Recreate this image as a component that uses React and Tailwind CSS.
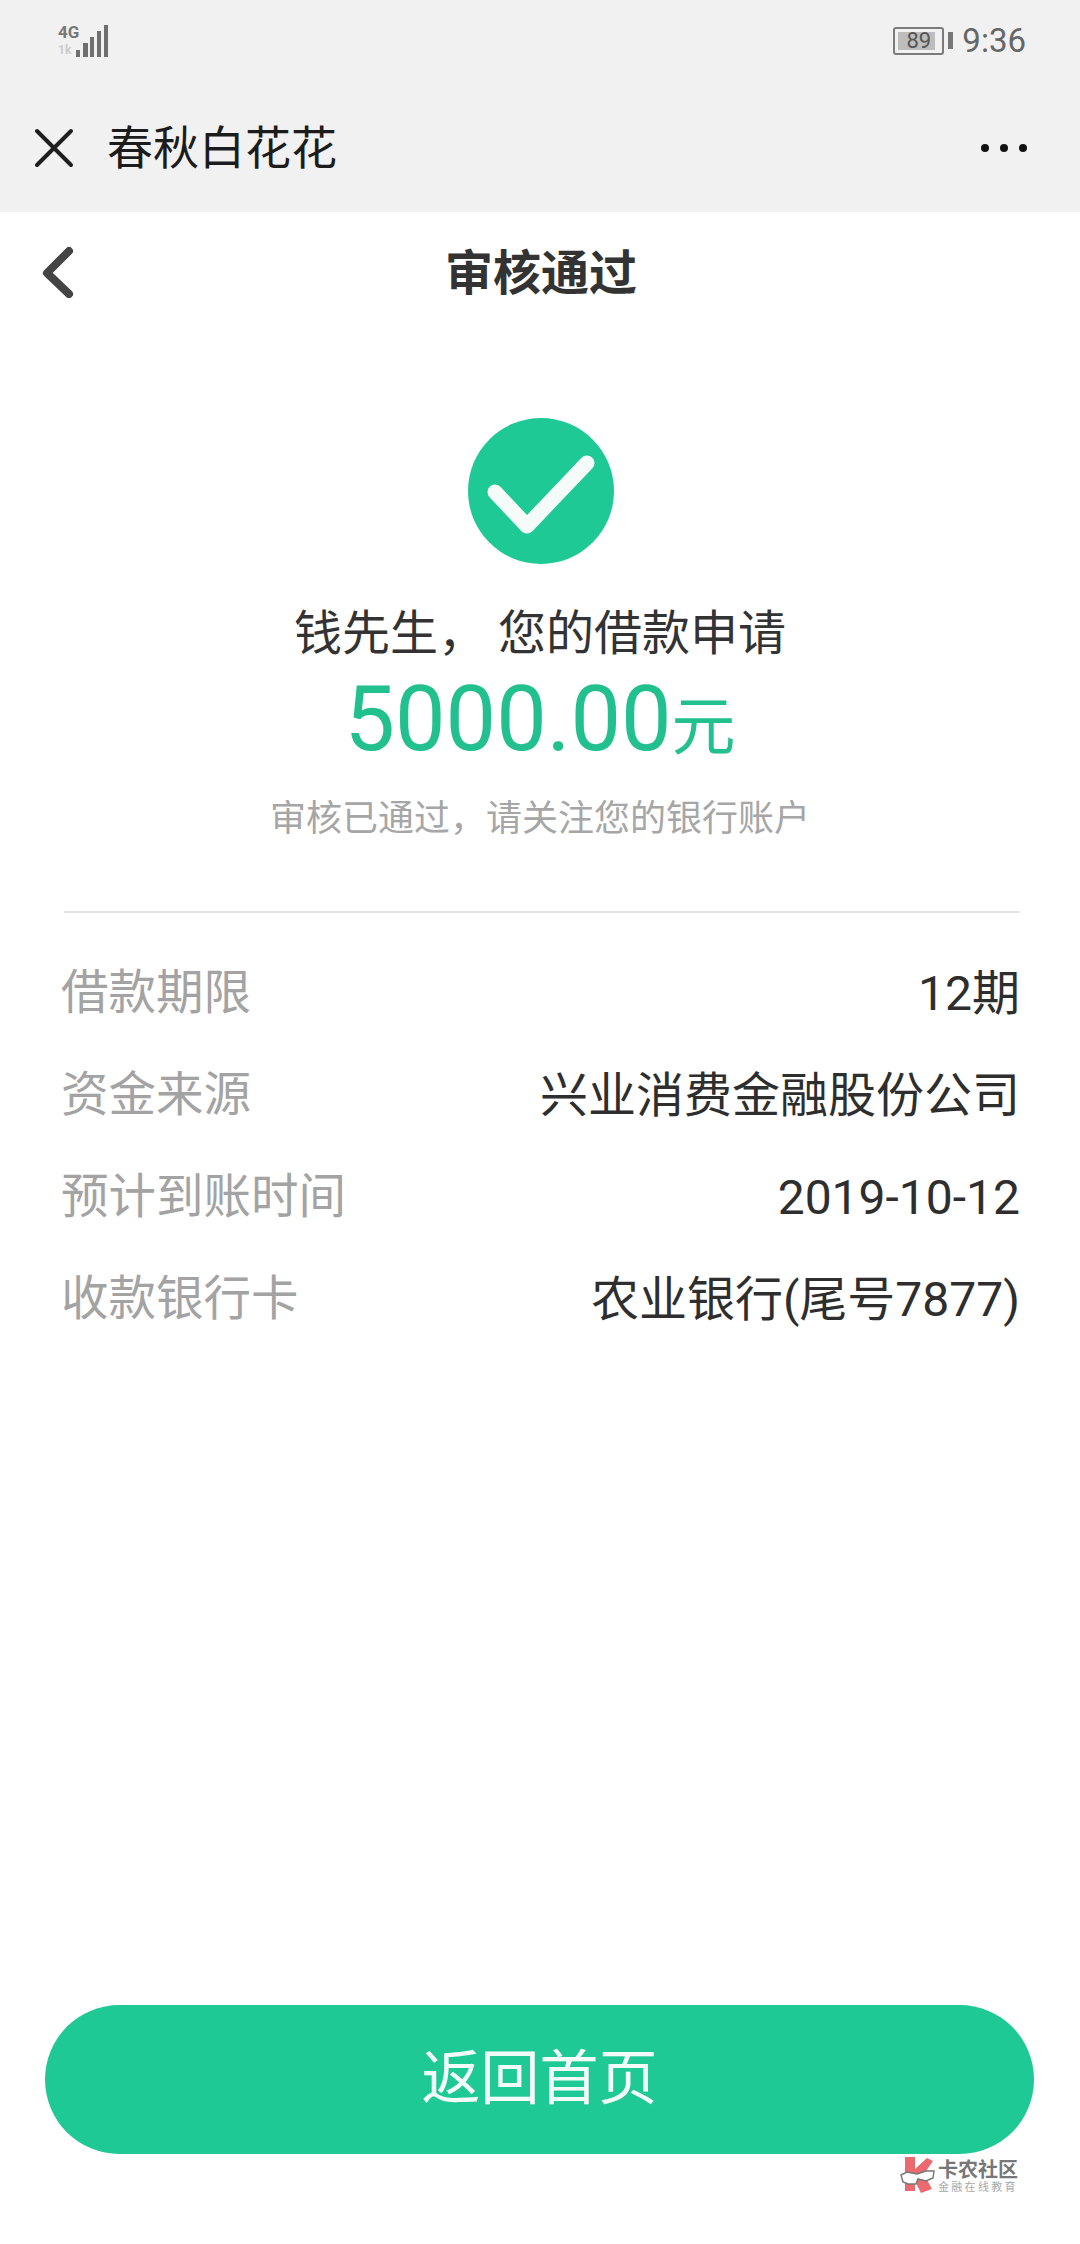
const cjk = { fontFamily: '"Roboto","Noto Sans CJK SC",sans-serif' };

function Row({ label, value }) {
  return (
    <div className="flex h-[102px] items-center justify-between">
      <span className="text-[47.5px] leading-none text-[#a3a3a3]">{label}</span>
      <span className="text-[48px] leading-none text-[#2e2e2e]">{value}</span>
    </div>
  );
}

export default function App() {
  return (
    <div className="relative h-[2244px] w-[1080px] overflow-hidden bg-white" style={cjk}>
      <div className="h-[212px] bg-[#f1f1f1]">
        <div className="flex h-[116px] items-start justify-between pl-[58px] pr-[54px] pt-[24px]">
          <div className="relative h-[34px] w-[52px]">
            <span className="absolute left-0 top-[-1px] text-[17px] font-bold leading-[18px] text-[#777]">4G</span>
            <span className="absolute left-0 top-[20px] text-[12px] font-bold leading-[13px] text-[#ccc]">1k</span>
            <svg className="absolute left-0 top-0" width="52" height="34" viewBox="0 0 52 34">
              <g fill="#6f6f6f">
                <rect x="18" y="26" width="4" height="7" />
                <rect x="25" y="19" width="5" height="14" />
                <rect x="32" y="13" width="4" height="20" />
                <rect x="39" y="7" width="4" height="26" />
                <rect x="46" y="1" width="4" height="32" />
              </g>
            </svg>
          </div>
          <div className="flex items-center">
            <div className="relative mr-[2px] flex h-[28px] w-[51px] items-center justify-center rounded-[3px] border-2 border-[#7b7b7b]">
              <div className="absolute inset-y-[3px] left-[3px] right-[7px] bg-[#bdbdbd]" />
              <span className="relative text-[22px] leading-none text-[#555]">89</span>
            </div>
            <div className="ml-[2px] h-[17px] w-[5px] bg-[#777]" />
            <span className="ml-[9px] text-[33px] leading-none text-[#666]">9:36</span>
          </div>
        </div>
        <div className="flex h-[64px] items-center justify-between pl-[33px] pr-[53px]">
          <div className="flex items-center">
            <svg width="42" height="42" viewBox="0 0 42 42" fill="none" stroke="#1f1f1f" strokeWidth="4" strokeLinecap="round">
              <path d="M4 4 38 38M38 4 4 38" />
            </svg>
            <span className="ml-[32px] text-[46px] leading-none text-[#1c1c1c]">春秋白花花</span>
          </div>
          <div className="flex gap-[11px]">
            <div className="size-[8px] rounded-full bg-[#111]" />
            <div className="size-[8px] rounded-full bg-[#111]" />
            <div className="size-[8px] rounded-full bg-[#111]" />
          </div>
        </div>
      </div>

      <div className="relative flex h-[120px] items-center justify-center pl-[2px] pt-[3px]">
        <svg className="absolute left-[40px] top-[34px]" width="36" height="52" viewBox="0 0 36 52" fill="none" stroke="#444" strokeWidth="8" strokeLinecap="round" strokeLinejoin="round">
          <path d="M29 5 7 27 29 48" />
        </svg>
        <span className="text-[48px] font-bold leading-none text-[#333]">审核通过</span>
      </div>

      <div className="flex flex-col items-center pt-[86px]">
        <svg className="ml-[1px]" width="146" height="146" viewBox="0 0 146 146">
          <circle cx="73" cy="73" r="73" fill="#1fc995" />
          <path d="M27 74 59 108 119 45" fill="none" stroke="#f4fbf8" strokeWidth="15" strokeLinecap="round" strokeLinejoin="round" />
        </svg>
        <div className="mt-[41px] whitespace-pre text-[48px] leading-[58px] text-[#333]">钱先生， 您的借款申请</div>
        <div className="mt-[7px] flex h-[100px] items-end leading-none text-[#22c08f]">
          <span className="text-[90px] leading-[100px]">5000.00</span>
          <span className="mb-[10px] text-[64px] leading-none">元</span>
        </div>
        <div className="mt-[29px] text-[36px] leading-[40px] text-[#a6a6a6]">审核已通过，请关注您的银行账户</div>
      </div>

      <div className="ml-[64px] mr-[60px] mt-[72px] border-t-2 border-[#e4e4e4] pt-[30px]">
        <div className="-ml-[3px]">
          <Row label="借款期限" value="12期" />
          <Row label="资金来源" value="兴业消费金融股份公司" />
          <Row label="预计到账时间" value="2019-10-12" />
          <Row label="收款银行卡" value="农业银行(尾号7877)" />
        </div>
      </div>

      <div className="absolute bottom-[90px] left-[45px] flex h-[149px] w-[989px] items-center justify-center rounded-full bg-[#1fc995] text-[59px] text-[#f2fbf8]">
        返回首页
      </div>

      <div className="absolute left-[900px] top-[2157px] flex items-start">
        <svg width="35" height="36" viewBox="0 0 35 36">
          <path d="M5 0H15V12L27 1 33 4 24 17 32 32 21 36 15 24V34H5Z" fill="#ea6a70" />
          <path d="M1 18 7 15 17 17 26 14 34 14 33 21 26 24 18 22 16 27 8 27 3 25Z" fill="#fff" stroke="#777" strokeWidth="1.5" />
        </svg>
        <div className="ml-[3px] flex flex-col pt-[3px]">
          <span className="text-[20px] font-bold leading-[20px] text-[#777]">卡农社区</span>
          <span className="text-[11px] leading-[15px] tracking-[2.3px] text-[#a8a8a8]">金融在线教育</span>
        </div>
      </div>
    </div>
  );
}
